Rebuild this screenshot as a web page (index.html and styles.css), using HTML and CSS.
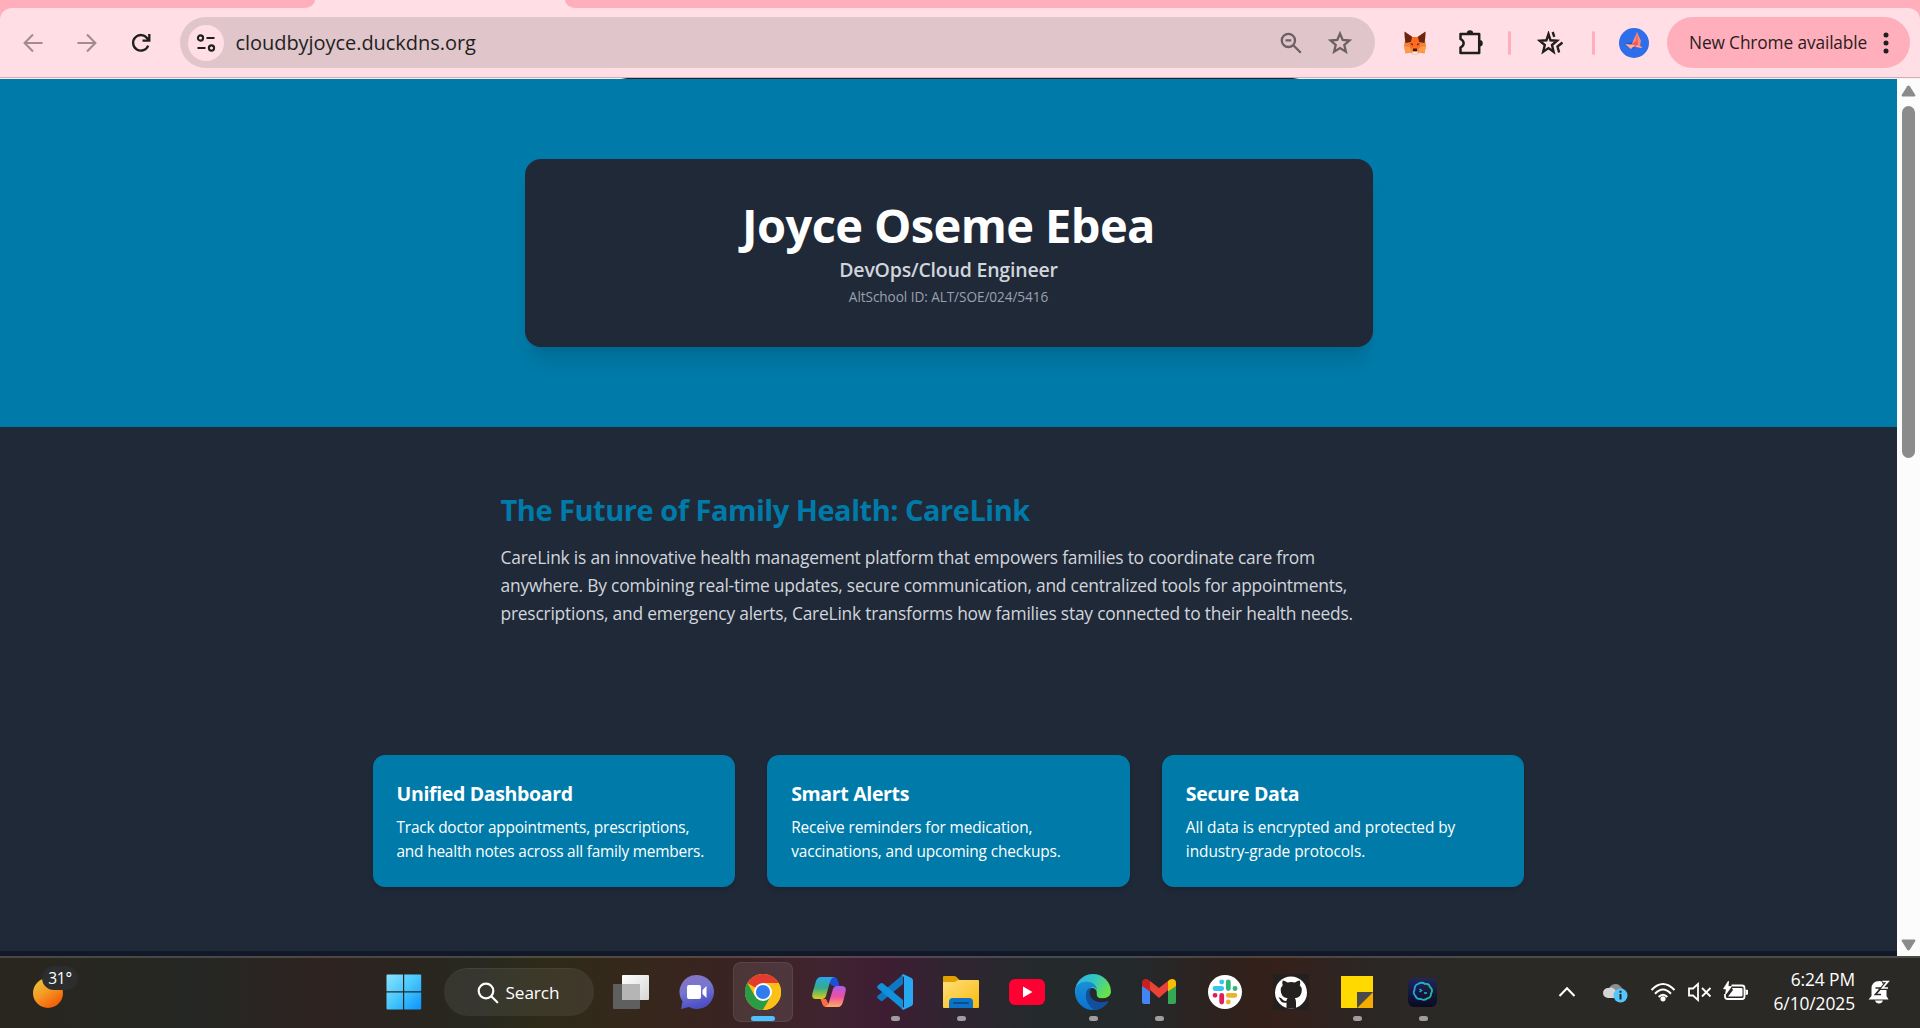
FILE: index.html
```html
<!DOCTYPE html>
<html lang="en">
<head>
<meta charset="utf-8">
<title>CareLink</title>
<link rel="stylesheet" href="styles.css">
</head>
<body>
<header class="browser">
  <div class="tabstrip"><div class="tabs-left"></div><div class="tab-active"></div><div class="tabs-right"></div></div>
  <div class="toolbar">
    <nav class="nav">
      <span class="cell c54"><svg width="20" height="20" viewBox="0 0 20 20" fill="none" stroke="#a38c91" stroke-width="2.1"><path d="M19.5 10H2M10 1.5 1.6 10l8.4 8.5"/></svg></span>
      <span class="cell c54"><svg width="20" height="20" viewBox="0 0 20 20" fill="none" stroke="#a38c91" stroke-width="2.1"><path d="M.5 10H18M10 1.5l8.4 8.5-8.4 8.5"/></svg></span>
      <span class="cell c54"><svg width="20" height="20" viewBox="0 0 20 20" fill="none" stroke="#1f1f1f" stroke-width="2.3"><path d="M17.2 12.6A7.8 7.8 0 1 1 16.2 5.2L18 7M18.3 1v6.7h-6.8"/></svg></span>
    </nav>
    <div class="address">
      <span class="siteinfo"><svg width="20" height="20" viewBox="0 0 20 20" fill="none" stroke="#1f1f1f" stroke-width="2.1"><circle cx="4.5" cy="5" r="2.6"/><path d="M10.5 5h8M1.500 15h8"/><circle cx="15.5" cy="15" r="2.6"/></svg></span>
      <span class="url">cloudbyjoyce.duckdns.org</span>
      <svg class="magnify" width="22" height="22" viewBox="0 0 22 22" fill="none" stroke="#6b6064" stroke-width="2.300"><circle cx="8.4" cy="8.4" r="6.6"/><path d="m13.3 13.3 7.5 7.5M5.5 8.4h5.8"/></svg>
      <svg class="star" width="24" height="23" viewBox="0 0 24 23" fill="none" stroke="#6b6064" stroke-width="2.300"><path d="m12 2.6 2.7 6.3 6.8.6-5.2 4.5 1.6 6.7-5.9-3.6-5.9 3.6L7.700 14 2.500 9.500l6.800-.6z"/></svg>
    </div>
    <span class="cell c55"><svg width="24" height="24" viewBox="0 0 24 24"><path fill="#f0803b" d="m1.500 1 7.500 5h6l7.500-5-.5 8 1 6-1.500 7.500-5-1-2.500 2h-4l-2.500-2-5 1L1 15l1-6z"/><path fill="#6b2412" d="M1.500.500 9.500 6 8 11l-5.500 1L1.800 7zM22.500.500 14.500 6l1.500 5 5.500 1 .7-5z"/><path fill="#ff6a1c" d="M9 6h6l1 6 2 5-4 .5-2-2-2 2-4-.5 2-5z"/><path fill="#ff9a4a" d="M1 15l6 1 1.500 4.500-6 1.500zM23 15l-6 1-1.500 4.500 6 1.500z"/><path fill="#3a1a10" d="m7 12 3 1-.5 1.500zM17 12l-3 1 .5 1.500zM10 17.500h4V20h-4z"/><path fill="#f4e8e0" d="m8.500 20.500 1.500.500h4l1.500-.5-1.500 3h-4z"/></svg></span>
    <span class="cell c56 lift"><svg width="26" height="26" viewBox="0 0 26 26"><path fill="none" stroke="#1f1f1f" stroke-width="2.500" stroke-linejoin="round" d="M2.500 5h18.700v19H2.500v-5.500c4.200-2.300 4.200-6.300 0-8.500z"/><path fill="#1f1f1f" d="M8.800 4.500a3.200 3.200 0 0 1 6.400 0zM21.500 11a3.200 3.200 0 0 1 0 6.500z"/></svg></span>
    <span class="cell c22"><i class="divider"></i></span>
    <span class="cell c60"><svg width="26" height="24" viewBox="0 0 26 24" fill="none" stroke="#1f1f1f" stroke-width="2.400"><path d="m11.500 3 2 6.300 6.500.500-5 4.200 1.600 6.800-5.100-3.700-5.300 3.700L7.800 14l-5-4.200 6.600-.5z"/><path d="m15.700 1 1.600 4.800M25.500 11.500l-5 4 1.600 6"/></svg></span>
    <span class="cell c26"><i class="divider"></i></span>
    <span class="cell c56"><svg width="30" height="30" viewBox="0 0 30 30"><circle cx="15" cy="15" r="15" fill="#2f6eea"/><path fill="#2556bb" d="m5 16 8-2 2 7-5-2z"/><path fill="#ff8878" d="m18 4 4 9-1 4 2 3-6-1-5-1z"/><path fill="#e85e5e" d="m18 4-1 9-9 6h7l4-2z"/><path fill="#ffb09d" d="m6 16 10 1-4 4zM17 17l7 3-6-1z"/></svg></span>
    <div class="update"><span>New Chrome available</span><svg width="6" height="22" viewBox="0 0 6 22" fill="#1f1f1f"><circle cx="3" cy="3" r="2.500"/><circle cx="3" cy="11" r="2.500"/><circle cx="3" cy="19" r="2.500"/></svg></div>
  </div>
  <div class="bubble-edge"></div>
</header>

<div class="viewport">
  <main class="page">
    <section class="hero">
      <div class="profile">
        <h1>Joyce Oseme Ebea</h1>
        <p class="role">DevOps/Cloud Engineer</p>
        <p class="ident">AltSchool ID: ALT/SOE/024/5416</p>
      </div>
    </section>
    <section class="about">
      <h2>The Future of Family Health: CareLink</h2>
      <p>CareLink is an innovative health management platform that empowers families to coordinate care from anywhere. By combining real-time updates, secure communication, and centralized tools for appointments, prescriptions, and emergency alerts, CareLink transforms how families stay connected to their health needs.</p>
    </section>
    <section class="features">
      <article class="card"><h3>Unified Dashboard</h3><p>Track doctor appointments, prescriptions, and health notes across all family members.</p></article>
      <article class="card"><h3>Smart Alerts</h3><p class="looser">Receive reminders for medication, vaccinations, and upcoming checkups.</p></article>
      <article class="card"><h3>Secure Data</h3><p class="loosest">All data is encrypted and protected by industry-grade protocols.</p></article>
    </section>
  </main>
  <div class="scrollbar">
    <svg width="15" height="12" viewBox="0 0 15 12"><path fill="#8b8b8b" d="M6.200 1.200q1.300-1.500 2.600 0l5.400 8.500q.7 1.800-1 1.800H1.800q-1.700 0-1-1.800z"/></svg>
    <div class="thumb"></div>
    <svg class="down" width="15" height="12" viewBox="0 0 15 12"><path fill="#8b8b8b" d="M6.200 10.800q1.300 1.500 2.600 0l5.400-8.500q.7-1.800-1-1.800H1.800q-1.700 0-1 1.800z"/></svg>
  </div>
</div>

<footer class="taskbar">
  <div class="weather"><i class="moon"></i><span class="temp">31°</span></div>
  <div class="apps">
    <span class="tile start"><svg width="36" height="36" viewBox="0 0 36 36"><defs><linearGradient id="win" x1="0" y1="0" x2="1" y2="1"><stop offset="0" stop-color="#8be3ff"/><stop offset=".5" stop-color="#45c6fd"/><stop offset="1" stop-color="#0a94fb"/></linearGradient></defs><path fill="url(#win)" d="M1.500.5H17v16.800H.5V1.500q0-1 1-1zM18.200.500h16q1 0 1 1v15.800h-17zM.5 18.500H17v17H1.500q-1 0-1-1zM18.200 18.500h17v16q0 1-1 1h-16z"/></svg></span>
    <div class="search"><svg width="22" height="22" viewBox="0 0 22 22" fill="none" stroke="#fff" stroke-width="2.200" stroke-linecap="round"><circle cx="9" cy="9" r="7.300"/><path d="m14.300 14.300 6 6"/></svg><span>Search</span></div>
    <span class="tile"><svg width="36" height="36" viewBox="0 0 36 36"><defs><linearGradient id="tv" x1="0" y1="0" x2="1" y2="1"><stop offset="0" stop-color="#fff"/><stop offset="1" stop-color="#d6d6d6"/></linearGradient></defs><rect x="9" y="1" width="27" height="25" rx="1" fill="url(#tv)"/><rect x="0" y="10" width="27" height="25" rx="1" fill="#5f5f5f"/><path fill="#b5b5b5" d="M9 10h18v16H9z"/></svg></span>
    <span class="tile"><svg width="36" height="36" viewBox="0 0 36 36"><defs><linearGradient id="chat" x1="0" y1="0" x2=".3" y2="1"><stop offset="0" stop-color="#8a72c4"/><stop offset=".5" stop-color="#7577cf"/><stop offset="1" stop-color="#4c50c4"/></linearGradient></defs><path fill="url(#chat)" d="M18 1a17 17 0 1 1-8 32l-8 2 1.500-7.500A17 17 0 0 1 18 1z"/><rect x="8" y="11" width="14" height="14" rx="2" fill="#fff"/><path fill="#fff" d="m23.500 16 4-4v12l-4-4z"/></svg></span>
    <span class="tile active"><svg width="36" height="36" viewBox="0 0 36 36"><circle cx="18" cy="18" r="18" fill="#fbc116"/><path fill="#e33b2e" d="M18 18 2.400 9A18 18 0 0 1 33.600 9H18z"/><path fill="#2a9c46" d="M2.400 9a18 18 0 0 0 15.600 27L25.800 22.500 18 18l-7.800 4.500z"/><path fill="#fbc116" d="M33.600 9H18l7.800 13.500L18 36A18 18 0 0 0 33.600 9z"/><circle cx="18" cy="18" r="9" fill="#fff"/><circle cx="18" cy="18" r="7.100" fill="#2f7cf0"/></svg></span>
    <span class="tile"><svg width="36" height="36" viewBox="0 0 36 36"><defs><linearGradient id="cpA" x1="0" y1="0" x2="0" y2="1"><stop offset="0" stop-color="#2aa5f0"/><stop offset=".5" stop-color="#35ab88"/><stop offset="1" stop-color="#d9cf1a"/></linearGradient><linearGradient id="cpB" x1="0" y1="0" x2="0" y2="1"><stop offset="0" stop-color="#a95cf0"/><stop offset=".5" stop-color="#ee4f9f"/><stop offset="1" stop-color="#ffac62"/></linearGradient></defs><path fill="#1c50d8" d="M19 3h4q3 0 4 4l1.500 5H23q-3 0-4-3z"/><path fill="#ff6a45" d="M9.500 25H15l4 8h-4q-3 0-4-4z"/><path fill="url(#cpA)" d="M10 3h13q-3 1-4 5l-4 14q-1 3-4 3H5q-5 0-3.500-6L5 7q1.500-4 5-4z"/><path fill="url(#cpB)" d="M27 33H14q3-1 4-5l4-13q1-3 4-3h5q5 0 3.500 6L32 28q-1.500 5-5 5z"/></svg></span>
    <span class="tile run"><svg width="36" height="36" viewBox="0 0 36 36"><path fill="#0b78c1" d="M26 .5V10L6 26.500q-1.500 1-2.700 0l-2.600-2.300q-1.200-1.200 0-2.400z"/><path fill="#1191dc" d="M26 35.500V26L6 9.500q-1.500-1-2.700 0L.7 11.800q-1.200 1.200 0 2.400z"/><path fill="#27a8f2" d="M26.500.2 34.500 4Q36 5 36 6.500v23q0 1.500-1.500 2.500l-8 3.800q-1 .2-2-1L27 33V3l-2.500-1.800q1-1.200 2-1z"/></svg></span>
    <span class="tile run"><svg width="36" height="36" viewBox="0 0 36 36"><defs><linearGradient id="fold" x1="0" y1="0" x2="1" y2="1"><stop offset="0" stop-color="#ffe07a"/><stop offset="1" stop-color="#f9b90f"/></linearGradient></defs><path fill="#dfa000" d="M0 3q0-1 1-1h10q1.500 0 2.500 1l3 3-3 3H0z"/><path fill="url(#fold)" d="M0 8h11q1.500 0 2.500-1t2.500-1h19q1 0 1 1v26q0 1-1 1H1q-1 0-1-1z"/><path fill="#0d73c4" d="M6 34v-6q0-4 4-4h16q4 0 4 4v6z"/><path stroke="#0b4c92" stroke-width="1.800" stroke-linecap="round" d="M11 29h14"/></svg></span>
    <span class="tile"><svg width="36" height="36" viewBox="0 0 36 36"><rect y="5" width="36" height="26" rx="6" fill="#ff0033"/><path fill="#fff" d="m14 12.500 9.500 5.500-9.500 5.500z"/></svg></span>
    <span class="tile run"><svg width="36" height="36" viewBox="0 0 36 36"><defs><linearGradient id="edT" x1="0" y1="0" x2="1" y2=".5"><stop offset="0" stop-color="#2cb3ee"/><stop offset=".5" stop-color="#33c4c4"/><stop offset="1" stop-color="#66e04c"/></linearGradient><linearGradient id="edL" x1="0" y1="0" x2="0" y2="1"><stop offset="0" stop-color="#1a8fd8"/><stop offset="1" stop-color="#0a72ce"/></linearGradient><clipPath id="edC"><circle cx="18" cy="18" r="18"/></clipPath></defs><g clip-path="url(#edC)"><path fill="url(#edT)" d="M0 0h36v19q-2 5.500-8 5.500-5 0-6-2.500l-1-6L0 20z"/><path fill="url(#edL)" d="M0 18C0 12 5 7.500 11.500 7.500 18 7.500 22 12 22 16c-1-2-3-3-5-3-4 2-5 7-3 11 3 5 12 7 20 2.500L30 36H0z"/><path fill="#124f9c" d="M11 20c-1 6 3 12 8 16h10l5-9.500c-6 3-13 2-16.500-1.500C14.500 22.500 14 18 16 14c-3 0-5 3-5 6z"/></g><path fill="#25292c" d="M16 14c4 0 6 2 5.500 5-.5 2-1.500 2.500 0 4 2.500 2 8 2 12.500-.5l2 1-2 3.500c-6 2-13 1-16.500-3C14.500 21.500 14 17 16 14z"/></svg></span>
    <span class="tile run"><svg width="36" height="36" viewBox="0 0 36 36"><path fill="#4285f4" d="M1 9v19q0 2 2 2h6V14z"/><path fill="#34a853" d="M35 9v19q0 2-2 2h-6V14z"/><path fill="#ea4335" d="M9 16V7l9 7 9-7v9l-9 8z"/><path fill="#c5221f" d="M1 12V9q0-4 4-4 2 0 4 2v10.500z"/><path fill="#fbbc04" d="M35 12V9q0-4-4-4-2 0-4 2v10.500z"/></svg></span>
    <span class="tile"><svg width="36" height="36" viewBox="0 0 36 36"><circle cx="18" cy="18" r="17" fill="#fff"/><g stroke-width="4.800" stroke-linecap="round"><path stroke="#36c5f0" d="M14.700 8v.1M8 14.500h6.700"/><path stroke="#2eb67d" d="M21.300 8v6.500M28 14.500h.1"/><path stroke="#ecb22e" d="M21.300 21.300H28M21.300 27.900v.1"/><path stroke="#e01e5a" d="M14.700 21.300V28M8 21.300h.1"/></g></svg></span>
    <span class="tile"><svg width="36" height="36" viewBox="0 0 36 36"><path fill="#24201f" d="M0 0h36v36H0z"/><circle cx="18" cy="18.500" r="16" fill="#fff"/><path fill="#24201f" d="M13.500 34.500v-6q-5 1-6.500-3l-1.500-2q2.500-.5 4 2 1.500 2 4 1.200.2-1.600 1.200-2.500-7-1-7-8 0-3 2-5-1-2 0-4.800 2 0 4.800 2 3.500-1 7.500 0 2.800-2 4.800-2 1 2.800 0 4.800 2 2 2 5 0 7-7 8 1.200 1 1.200 4v6.300z"/></svg></span>
    <span class="tile run"><svg width="36" height="36" viewBox="0 0 36 36"><path fill="#ffd900" d="M2 2h32v16L18 34H2z"/><path fill="#f5ab00" d="M34 18v16H18z"/><path fill="#4a4a4a" d="M18 18h16L18 34z"/></svg></span>
    <span class="tile run"><svg width="36" height="36" viewBox="0 0 36 36"><defs><linearGradient id="tm" x1="0" y1="0" x2="0" y2="1"><stop offset="0" stop-color="#20275c"/><stop offset="1" stop-color="#080b20"/></linearGradient><linearGradient id="tl"><stop offset="0" stop-color="#2a9df0"/><stop offset="1" stop-color="#1fc08e"/></linearGradient></defs><rect x="3" y="4" width="29" height="29" rx="6" fill="url(#tm)"/><path fill="none" stroke="url(#tl)" stroke-width="1.800" d="M13 10q4-2.500 7 0 4-1 5 3 3.500 3 1 6.500 0 4.500-4 5-3 2.500-6 .5-4.500.5-5.500-3-3-3-1-6 0-5 3.500-6z"/><path stroke="#2fb2cc" stroke-width="1.500" d="m14.500 15 2 1.500-2 1.500M19 19h3" fill="none"/></svg></span>
  </div>
  <div class="tray">
    <span class="cell c54"><svg width="18" height="12" viewBox="0 0 18 12" fill="none" stroke="#fff" stroke-width="2"><path d="m1.500 10 7.500-7.800L16.500 10"/></svg></span>
    <span class="cell c42"><svg width="26" height="22" viewBox="0 0 26 22"><path fill="#8d8d8d" d="M7 9a6.500 6.500 0 0 1 12-3q3 2 3 6H9z"/><path fill="#d4d4d4" d="M6 17a5 5 0 0 1 0-10q5-2 8 3l4 7z"/><circle cx="18.500" cy="14.500" r="7" fill="#56c5fb"/><path stroke="#16242c" stroke-width="2" d="M18.500 13v5.500M18.500 9.800v2"/></svg></span>
    <span class="cell c54"><svg width="26" height="20" viewBox="0 0 26 20" fill="none" stroke="#fff" stroke-width="2"><path d="M1.500 8q11.500-12 23 0M5 11.700q8-8.500 16 0M8.700 15q4.300-4.600 8.600 0"/><circle cx="13" cy="16.800" r="1.600" fill="#fff"/></svg></span>
    <span class="cell c19"><svg width="24" height="20" viewBox="0 0 24 20" fill="none" stroke="#fff" stroke-width="1.800"><path d="M1 6.500h4L10 2v16l-5-4.500H1zM14 6l8.500 8.500M22.500 6 14 14.500"/></svg></span>
    <span class="cell c54"><svg width="26" height="22" viewBox="0 0 26 22"><path fill="none" stroke="#fff" stroke-width="1.800" d="M8.500 4.500H19q2.500 0 2.500 2.500v8.500Q21.500 18 19 18H4.500Q2 18 2 15.500V13"/><path fill="#fff" d="M9 7h9.500q1 0 1 1v6.500q0 1-1 1H5L10 9zM22.500 8.500l2.500.5v4.500l-2.500.5zM5 0l1 .2L5.500 5 9 5.200 3.500 13 2 12.800 3 8.500 0 8z"/></svg></span>
    <div class="clock"><span>6:24 PM</span><span>6/10/2025</span></div>
    <svg class="bell" width="23" height="26" viewBox="0 0 23 26"><path fill="#fff" d="M3.500 17V10q0-8 8-8l4 1 3 7v7l2 3.500H.5zM7 21.500h8q-1 3-4 3t-4-3z"/><path fill="none" stroke="#2a2926" stroke-width="4" d="M14 2.500h6l-5.500 6.500h6"/><path fill="none" stroke="#2a2926" stroke-width="1.700" d="M7.500 9h5.500l-5.500 6.500H13"/><path fill="none" stroke="#fff" stroke-width="1.700" d="M14.500 2.500H20L14.500 9H20"/></svg>
  </div>
</footer>
</body>
</html>
```

FILE: styles.css
```css
* { box-sizing: border-box; }

body {
  margin: 0;
  height: 1028px;
  overflow: hidden;
  display: flex;
  flex-direction: column;
  font-family: "Open Sans", "Noto Sans", sans-serif;
}

h1, h2, h3, p { margin: 0; }
svg { display: block; flex: none; }

/* Browser chrome */
.browser { height: 79px; background: #ffaebc; flex: none; position: relative; }
.tabstrip { height: 8px; display: flex; background: #ffdfe5; }
.tabs-left { width: 315px; background: #ffaebc; border-bottom-right-radius: 11px 8px; }
.tab-active { width: 250px; }
.tabs-right { flex: 1; background: #ffaebc; border-bottom-left-radius: 11px 8px; }
.toolbar {
  height: 71px;
  display: flex;
  align-items: center;
  padding: 0 10px 2px 6px;
  background: linear-gradient(to top, #fdeef0 0 1px, #cbb1b7 1px 2px, #ffdfe5 2px);
  border-radius: 12px 12px 0 0;
}
/* Lower rim of a permission bubble that overlaps the toolbar's edge */
.bubble-edge {
  position: absolute;
  left: 621px;
  bottom: 0;
  width: 678px;
  height: 1px;
  background: linear-gradient(90deg, transparent, #22252b 6px calc(100% - 6px), transparent);
}
.nav { display: flex; }
.cell { display: flex; align-items: center; justify-content: center; flex: none; }
.c19 { width: 19px; }
.c22 { width: 22px; }
.c26 { width: 26px; }
.c42 { width: 42px; }
.c54 { width: 54px; }
.c55 { width: 55px; margin-left: 12px; }
.c56 { width: 56px; }
.c60 { width: 60px; }
.lift { padding: 0 0 2px 1px; }
.address {
  width: 1195px;
  height: 51px;
  margin-left: 12px;
  padding: 0 23px 0 8px;
  display: flex;
  align-items: center;
  background: #e0c5ca;
  border-radius: 26px;
}
.siteinfo {
  width: 36px;
  height: 36px;
  border-radius: 50%;
  background: #ffdfe5;
  display: flex;
  align-items: center;
  justify-content: center;
}
.url { margin-left: 11.500px; flex: 1; font-size: 20px; letter-spacing: -0.05px; line-height: 28px; color: #1f1f1f; }
.star { margin-left: 26px; }
.divider { width: 3px; height: 24px; border-radius: 2px; background: #ffaebc; }
.update {
  width: 243px;
  height: 51px;
  margin-left: 5px;
  padding: 0 21px 0 22px;
  display: flex;
  align-items: center;
  justify-content: space-between;
  background: #ffaebc;
  border-radius: 26px;
  font-size: 17.300px;
  letter-spacing: -0.120px;
  color: #2a1c20;
  white-space: nowrap;
}

/* Web page */
.viewport { height: 877px; display: flex; flex: none; }
.page { width: 1897px; background: #111827; }
.hero { height: 348px; padding: 80px 0; background: #007ba9; }
.profile {
  width: 848px;
  height: 188px;
  margin: 0 auto;
  padding: 42px 40px 39px;
  border-radius: 16px;
  background: #202938;
  box-shadow: 0 20px 25px -5px rgba(0, 0, 0, .1), 0 8px 10px -6px rgba(0, 0, 0, .1);
  text-align: center;
}
h1 { font-size: 47px; line-height: 48px; letter-spacing: -0.600px; font-weight: 700; color: #fff; }
.role { margin-top: 7px; font-size: 19.500px; line-height: 28px; letter-spacing: -0.200px; font-weight: 600; color: #d1d5dc; }
.ident { margin-top: 3px; font-size: 13.600px; line-height: 20px; letter-spacing: -0.070px; color: #99a1af; }
.about { padding: 65px 500.500px 64px; background: #202938; }
.about h2 { font-size: 29px; line-height: 36px; letter-spacing: -0.480px; font-weight: 700; color: #007ba9; white-space: nowrap; }
.about p { width: 870px; margin-top: 15px; font-size: 17.400px; line-height: 28px; letter-spacing: -0.215px; color: #d1d5dc; }
.features {
  display: grid;
  grid-template-columns: repeat(3, 1fr);
  gap: 32px;
  padding: 64px 372.500px;
  background: #202938;
}
.card {
  height: 132px;
  padding: 25px 24px 23px;
  border-radius: 12px;
  background: #007ba9;
  color: #fff;
  box-shadow: 0 4px 6px -1px rgba(0, 0, 0, .1), 0 2px 4px -2px rgba(0, 0, 0, .1);
}
.card h3 { font-size: 19.500px; line-height: 28px; letter-spacing: -0.340px; font-weight: 700; }
.card p { margin-top: 8px; font-size: 15.400px; line-height: 24px; letter-spacing: -0.190px; }
.card .looser { letter-spacing: -0.130px; }
.card .loosest { letter-spacing: -0.060px; }
.scrollbar {
  width: 23px;
  padding: 6px 0 5px 3.500px;
  display: flex;
  flex-direction: column;
  background: #fcfcfc;
}
.thumb { width: 13px; height: 352px; margin: 9px 0 0 1px; border-radius: 7px; background: #8b8b8b; }
.down { margin-top: auto; }

/* Taskbar */
.taskbar {
  height: 72px;
  flex: none;
  display: flex;
  align-items: center;
  border-top: 2px solid rgba(255, 255, 255, .16);
  background: linear-gradient(90deg, #29261e 0, #252724 10%, #2e2321 17%, #29251f 22%, #272820 25%, #2e2b19 28%, #36271c 33.500%, #3a2322 38%, #402430 43%, #3e1d33 46%, #302531 49.500%, #24292c 54%, #24292c 59%, #2f211c 64%, #35201a 66.500%, #2b2624 71%, #2a2926 76%) border-box;
  color: #fff;
}
.weather { width: 370.500px; padding-left: 33px; display: flex; align-items: flex-start; position: relative; }
.moon { width: 30px; height: 30px; border-radius: 50%; background: linear-gradient(145deg, #e8c03a 10%, #f59a24 45%, #f3640a 80%); }
.temp {
  position: absolute;
  left: 42px;
  top: -12px;
  width: 36px;
  height: 24px;
  border-radius: 12px;
  background: #2c2d2e;
  font-size: 15.500px;
  line-height: 24px;
  letter-spacing: -0.3px;
  text-align: center;
}
.apps { display: flex; align-items: center; }
.tile { width: 66px; height: 60px; display: flex; align-items: center; justify-content: center; position: relative; bottom: 1px; }
.start { width: 67px; }
.search {
  width: 150px;
  height: 48px;
  margin: 0 4px 0 6px;
  padding-left: 33px;
  display: flex;
  align-items: center;
  gap: 7px;
  position: relative;
  bottom: 1px;
  border-radius: 24px;
  border-top: 1px solid #43433a;
  background: rgba(255, 255, 255, .07);
  font-size: 17.200px;
  letter-spacing: -0.1px;
}
.active { width: 60px; margin: 0 3px; border-radius: 8px; background: rgba(255, 255, 255, .09); border: 1px solid rgba(255, 255, 255, .07); }
.run::after, .active::after {
  content: "";
  position: absolute;
  left: 50%;
  bottom: 1px;
  width: 9px;
  height: 5px;
  margin-left: -4px;
  border-radius: 3px;
  background: #a19c9e;
}
.active::after { width: 24px; margin-left: -12px; bottom: 0; background: #4cc2ff; }
.tray { margin-left: 84.500px; display: flex; align-items: center; position: relative; bottom: 1px; }
.clock {
  width: 92px;
  padding-bottom: 2px;
  display: flex;
  flex-direction: column;
  align-items: flex-end;
  font-size: 17.400px;
  line-height: 24px;
  letter-spacing: -0.1px;
}
.bell { margin-left: 13px; }
```
